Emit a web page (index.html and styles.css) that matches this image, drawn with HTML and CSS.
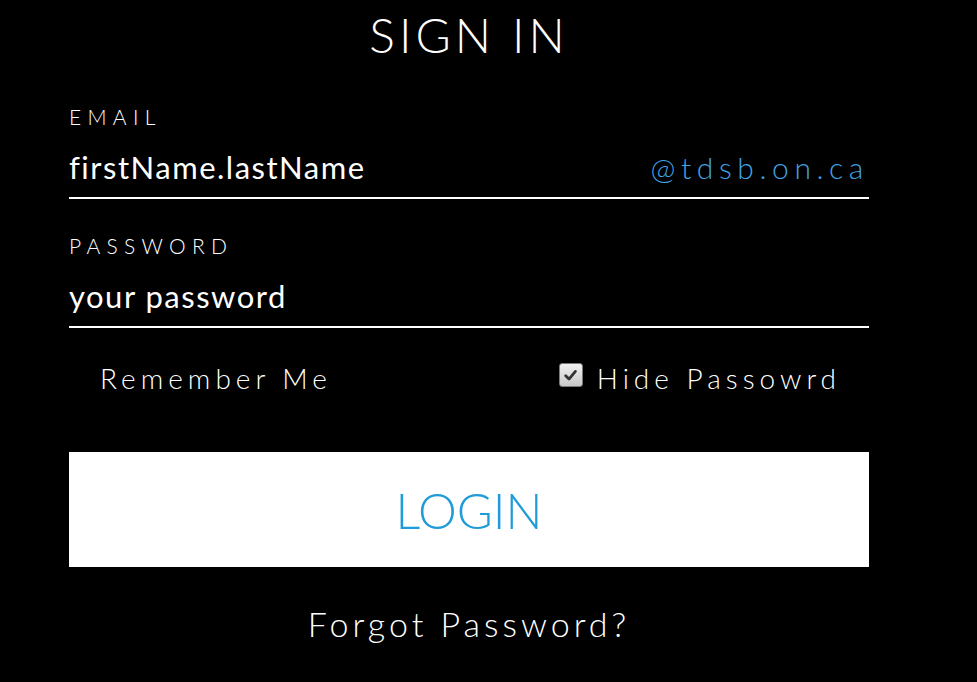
FILE: index.html
```html
<!DOCTYPE html>
<html lang="en">
<head>
<meta charset="utf-8">
<title>Sign In</title>
<link rel="stylesheet" href="styles.css">
</head>
<body>
<main class="signin">
  <h1 class="title">SIGN IN</h1>
  <div class="field">
    <label class="label">EMAIL</label>
    <div class="input-row">
      <span class="value">firstName.lastName</span>
      <span class="domain">@tdsb.on.ca</span>
    </div>
  </div>
  <div class="field">
    <label class="label">PASSWORD</label>
    <div class="input-row">
      <span class="value">your password</span>
    </div>
  </div>
  <div class="options">
    <span class="option remember">Remember Me</span>
    <span class="option hide">
      <span class="check"><svg viewBox="0 0 14 14" width="15" height="15"><path d="M2.5 7.2 L5.6 10.3 L11.6 3.2" fill="none" stroke="#333" stroke-width="2.6" stroke-linecap="round" stroke-linejoin="round"/></svg></span>
      Hide Passowrd
    </span>
  </div>
  <button class="login">LOGIN</button>
  <p class="forgot">Forgot Password?</p>
</main>
</body>
</html>
```
FILE: styles.css
```css
* { box-sizing: border-box; }
body {
  margin: 0;
  background: #000;
  color: #fff;
  font-family: "Lato", "Open Sans", sans-serif;
  font-weight: 300;
}
.signin {
  width: 800px;
  margin-left: 69px;
  display: flex;
  flex-direction: column;
}
.title {
  margin: 0;
  height: 70px;
  line-height: 70px;
  text-align: center;
  font-size: 48px;
  font-weight: 300;
  letter-spacing: 4px;
}
.field {
  display: flex;
  flex-direction: column;
  margin-top: 34px;
}
.label {
  font-size: 21px;
  letter-spacing: 6.3px;
  line-height: 26px;
}
.input-row {
  display: flex;
  justify-content: space-between;
  align-items: baseline;
  border-bottom: 2px solid #fff;
  height: 69px;
  padding-top: 18px;
}
.value {
  font-size: 31px;
  font-weight: 400;
  letter-spacing: 1.5px;
}
.domain {
  font-size: 30px;
  color: #42a3e0;
  letter-spacing: 5.6px;
}
.options {
  display: flex;
  justify-content: space-between;
  align-items: center;
  height: 124px;
  padding: 0 28px 24px 31px;
}
.option {
  font-size: 28px;
  letter-spacing: 5px;
}
.hide { display: flex; align-items: center; }
.check {
  width: 24px;
  height: 24px;
  margin-right: 14px;
  margin-top: -6px;
  border: 1px solid #7a7a7a;
  border-radius: 3px;
  background: linear-gradient(#f2f2f2, #c8c8c8);
  display: flex;
  align-items: center;
  justify-content: center;
}
.login {
  height: 115px;
  border: 0;
  background: #fff;
  color: #1f9bd8;
  font-family: inherit;
  font-weight: 300;
  font-size: 49px;
}
.forgot {
  margin: 0;
  text-align: center;
  padding-top: 36px;
  font-size: 34px;
  letter-spacing: 4px;
}
```
